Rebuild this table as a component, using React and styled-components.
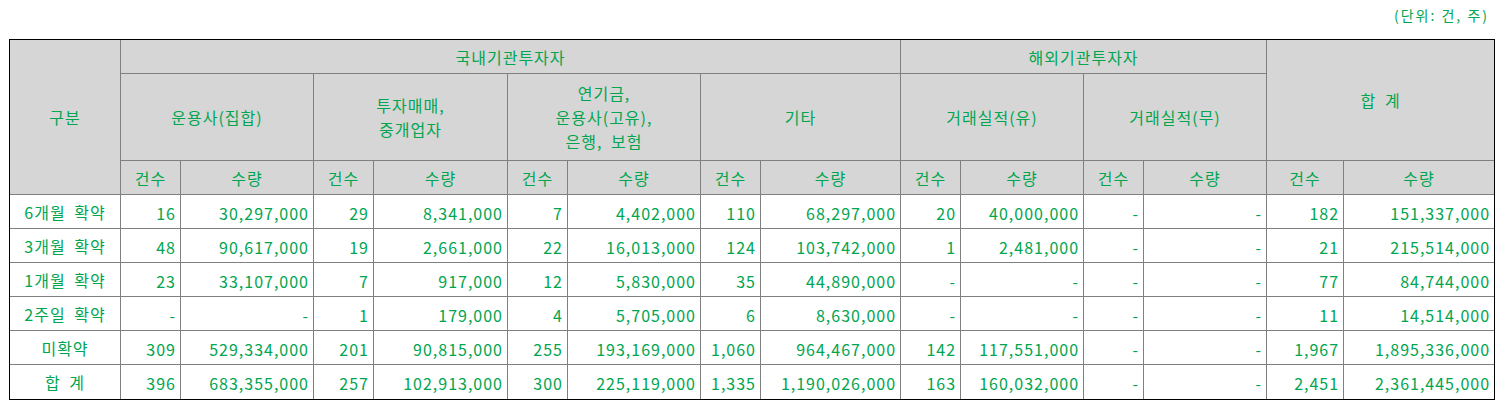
import styled, { createGlobalStyle } from 'styled-components';

const GREEN = "#00a54f";

const GlobalStyle = createGlobalStyle`
  body {
    margin: 0;
    background: #fff;
    font-family: "Noto Sans CJK KR", "Liberation Sans", sans-serif;
  }
`;

const widths = [111, 60, 133, 60, 134, 60, 133, 60, 140, 60, 123, 60, 123, 77, 150];

const rows = [
  ["6개월 확약", "16", "30,297,000", "29", "8,341,000", "7", "4,402,000", "110", "68,297,000", "20", "40,000,000", "-", "-", "182", "151,337,000"],
  ["3개월 확약", "48", "90,617,000", "19", "2,661,000", "22", "16,013,000", "124", "103,742,000", "1", "2,481,000", "-", "-", "21", "215,514,000"],
  ["1개월 확약", "23", "33,107,000", "7", "917,000", "12", "5,830,000", "35", "44,890,000", "-", "-", "-", "-", "77", "84,744,000"],
  ["2주일 확약", "-", "-", "1", "179,000", "4", "5,705,000", "6", "8,630,000", "-", "-", "-", "-", "11", "14,514,000"],
  ["미확약", "309", "529,334,000", "201", "90,815,000", "255", "193,169,000", "1,060", "964,467,000", "142", "117,551,000", "-", "-", "1,967", "1,895,336,000"],
  ["합 계", "396", "683,355,000", "257", "102,913,000", "300", "225,119,000", "1,335", "1,190,026,000", "163", "160,032,000", "-", "-", "2,451", "2,361,445,000"],
];

export default function App() {
  return (
    <Page>
      <GlobalStyle />
      <Unit>(단위: 건, 주)</Unit>
      <Table>
        <colgroup>
          {widths.map((w, i) => <col key={i} style={{ width: w }} />)}
        </colgroup>
        <thead>
          <HeadRow $h={34}>
            <Th rowSpan={3}>구분</Th>
            <Th colSpan={8}>국내기관투자자</Th>
            <Th colSpan={4}>해외기관투자자</Th>
            <Th rowSpan={2} colSpan={2} $edge>합 계</Th>
          </HeadRow>
          <HeadRow $h={87}>
            <Th colSpan={2}>운용사(집합)</Th>
            <Th colSpan={2}>투자매매,<br />중개업자</Th>
            <Th colSpan={2}>연기금,<br />운용사(고유),<br />은행, 보험</Th>
            <Th colSpan={2}>기타</Th>
            <Th colSpan={2}>거래실적(유)</Th>
            <Th colSpan={2}>거래실적(무)</Th>
          </HeadRow>
          <HeadRow $h={34}>
            {Array.from({ length: 7 }).flatMap((_, i) => [
              <Th key={"c" + i}>건수</Th>,
              <Th key={"q" + i} $edge={i === 6}>수량</Th>,
            ])}
          </HeadRow>
        </thead>
        <tbody>
          {rows.map((r, ri) => (
            <BodyRow key={ri}>
              {r.map((v, ci) =>
                ci === 0
                  ? <Label key={ci}>{v}</Label>
                  : <Num key={ci}>{v}</Num>
              )}
            </BodyRow>
          ))}
        </tbody>
      </Table>
    </Page>
  );
}

const Page = styled.div`
  padding-left: 9px;
  width: 1486px;
`;

const Unit = styled.div`
  height: 31px;
  line-height: 31px;
  margin-bottom: 8px;
  padding-right: 6px;
  text-align: right;
  font-size: 14px;
  letter-spacing: 2px;
  color: ${GREEN};
`;

const Table = styled.table`
  box-sizing: border-box;
  width: 1486px;
  table-layout: fixed;
  border-collapse: separate;
  border-spacing: 0;
  border: 1px solid #000;
  font-size: 16px;
  color: ${GREEN};
`;

const HeadRow = styled.tr`
  height: ${p => p.$h}px;
`;

const BodyRow = styled.tr`
  height: 34px;

  &:last-child td {
    border-bottom: none;
  }
  & td:last-child {
    border-right: none;
  }
`;

const Th = styled.th`
  box-sizing: border-box;
  padding: 0;
  background: #d6d6d6;
  font-weight: 400;
  text-align: center;
  vertical-align: middle;
  line-height: 24px;
  letter-spacing: 1px;
  word-spacing: 4px;
  border-right: ${p => (p.$edge ? "none" : "1px solid #808080")};
  border-bottom: 1px solid #808080;
`;

const Label = styled.td`
  box-sizing: border-box;
  padding: 0;
  text-align: center;
  vertical-align: middle;
  letter-spacing: 1px;
  word-spacing: 4px;
  border-right: 1px solid #808080;
  border-bottom: 1px solid #808080;
`;

const Num = styled.td`
  box-sizing: border-box;
  padding: 2px 4px 0 0;
  text-align: right;
  vertical-align: middle;
  letter-spacing: 1px;
  white-space: nowrap;
  border-right: 1px solid #808080;
  border-bottom: 1px solid #808080;
`;
